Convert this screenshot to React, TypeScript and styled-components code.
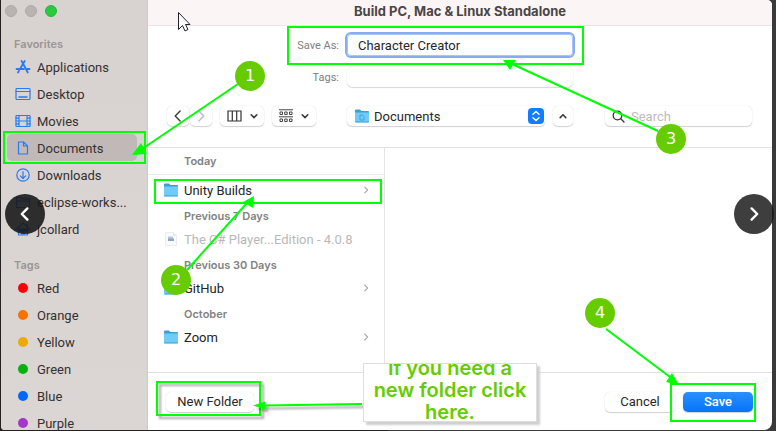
import React from "react";
import styled, { createGlobalStyle } from "styled-components";

const GlobalStyle = createGlobalStyle`
  * { box-sizing: border-box; }
  html, body, #root { height: 100%; }
  body {
    margin: 0;
    overflow: hidden;
    background: #3a3a3b;
    font-family: Roboto, "Liberation Sans", sans-serif;
    font-size: 13px;
    color: #282626;
  }
  button, input, select { font: inherit; color: inherit; margin: 0; }
  ul { list-style: none; margin: 0; padding: 0; }
`;

const Stage = styled.div`
  position: relative;
  min-height: 100vh;
  display: flex;
  padding: 0 4px 1px 1px;
  background: linear-gradient(90deg, #232122 0 50%, #3a3a3b 50%);
`;

const Dialog = styled.main`
  flex: 1;
  min-width: 0;
  display: flex;
  overflow: hidden;
  border-radius: 0 5px 8px 4px;
  background: #fff;
`;

const Sidebar = styled.aside`
  flex: none;
  width: 147px;
  height: calc(100vh - 1px);
  overflow: hidden;
  background: linear-gradient(180deg, #d8d2d1, #dbd5d3);
  border-right: 1px solid #cfc9c7;
`;

const Lights = styled.div`
  display: flex;
  gap: 8px;
  padding: 5px 4px 0;
  height: 36px;
`;

const Light = styled.button<{ $on?: boolean }>`
  width: 12px;
  height: 12px;
  padding: 0;
  border-radius: 50%;
  border: 1px solid ${(p) => (p.$on ? "#27b93b" : "#aea8a6")};
  background: ${(p) => (p.$on ? "#29c940" : "#b9b3b1")};
`;

const SideHeading = styled.h2`
  margin: 0;
  padding-left: 13px;
  font-family: Inter, sans-serif;
  font-size: 11px;
  line-height: 17px;
  font-weight: 600;
  color: #9b9593;
`;

const SideList = styled.ul`
  padding: 0 10px 0 6px;
  & + ${SideHeading} { margin-top: 15px; }
`;

const SideItem = styled.a<{ $active?: boolean }>`
  display: grid;
  grid-template-columns: 16px 1fr;
  align-items: center;
  gap: 6px;
  height: 27px;
  padding: 1px 0 0 8px;
  border-radius: 5px;
  color: #353130;
  text-decoration: none;
  white-space: nowrap;
  background: ${(p) => (p.$active ? "#c0b9b7" : "transparent")};
  svg { display: block; }
`;

const TagDot = styled.span<{ $color: string }>`
  width: 10px;
  height: 10px;
  justify-self: center;
  border-radius: 50%;
  background: ${(p) => p.$color};
`;

const Content = styled.section`
  flex: 1;
  min-width: 0;
  display: flex;
  flex-direction: column;
`;

const TitleBar = styled.header`
  height: 26px;
  padding-top: 2px;
  border-bottom: 1px solid #ebe5e5;
  background: #fcf5f5;
  text-align: center;
`;

const Title = styled.h1`
  margin: 0;
  font-family: Inter, sans-serif;
  font-size: 13px;
  line-height: 18px;
  font-weight: 700;
  color: #4a4546;
`;

const Controls = styled.form`
  display: grid;
  grid-template-columns: minmax(0, 1fr) 226px minmax(0, 1fr);
  grid-template-rows: 22px 42px 36px;
  column-gap: 8px;
  align-items: center;
  height: 121px;
  padding-top: 8px;
`;

const FieldLabel = styled.label`
  grid-column: 1;
  justify-self: end;
  font-size: 11px;
  color: #807e7e;
`;

const Field = styled.input<{ $focused?: boolean }>`
  grid-column: 2;
  width: 100%;
  height: ${(p) => (p.$focused ? 22 : 20)}px;
  padding: 0 11px;
  border: 0;
  border-radius: ${(p) => (p.$focused ? 4 : 5)}px;
  outline: 0;
  background: #fff;
  box-shadow: ${(p) =>
    p.$focused ? "0 0 0 2px #86acf4, inset 0 0 0 1px #a9c4f8" : "0 1px 1px #d6d6d6, 0 0 1px #d6d6d6"};
`;

const ToolGroup = styled.div`
  grid-column: 1;
  display: flex;
  gap: 8px;
  padding-left: 19px;
`;

const NavPair = styled.div`
  display: flex;
  gap: 1px;
`;

const ToolButton = styled.button<{ $wide?: boolean }>`
  flex: none;
  display: flex;
  align-items: center;
  justify-content: center;
  gap: 8px;
  width: ${(p) => (p.$wide ? 44 : 22)}px;
  height: 20px;
  padding: 0;
  border: 0;
  border-radius: 5px;
  background: #fff;
  box-shadow: 0 1px 1px #d0d0d0, 0 0 1px #cfcfcf;
`;

const CollapseButton = styled(ToolButton)`
  width: 20px;
`;

const Place = styled.div`
  display: flex;
  gap: 8px;
`;

const PlacePicker = styled.label`
  flex: 1;
  display: flex;
  align-items: center;
  gap: 4px;
  height: 20px;
  padding: 0 1px 0 7px;
  border-radius: 5px;
  box-shadow: 0 1px 1px #d0d0d0, 0 0 1px #cfcfcf;
  svg { flex: none; }
`;

const PlaceSelect = styled.select`
  flex: 1;
  min-width: 0;
  padding: 0;
  appearance: none;
  border: 0;
  outline: 0;
  background: transparent;
`;

const SearchBox = styled.label`
  display: flex;
  align-items: center;
  gap: 6px;
  height: 20px;
  margin: 0 20px 0 24px;
  padding-left: 7px;
  border-radius: 5px;
  box-shadow: 0 1px 1px #d0d0d0, 0 0 1px #cfcfcf;
  svg { flex: none; }
`;

const SearchInput = styled.input`
  flex: 1;
  min-width: 0;
  padding: 0;
  border: 0;
  outline: 0;
  background: transparent;
  &::placeholder { color: #bcbcbc; opacity: 1; }
`;

const Browser = styled.div`
  flex: 1;
  display: grid;
  grid-template-columns: 237px 1fr;
  border-top: 1px solid #e4e4e4;
  border-bottom: 1px solid #e0e0e0;
`;

const FileColumn = styled.div`
  border-right: 1px solid #e4e4e4;
`;

const GroupHeading = styled.h3<{ $first?: boolean }>`
  margin: 0;
  padding: ${(p) => (p.$first ? "3px 0 3px 36px" : "4px 0 1px 36px")};
  margin-bottom: ${(p) => (p.$first ? 3 : 0)}px;
  border-bottom: ${(p) => (p.$first ? "1px solid #ececec" : "0")};
  font-family: Inter, sans-serif;
  font-size: 11px;
  line-height: 20px;
  font-weight: 600;
  color: #828282;
`;

const FileRow = styled.button<{ $dim?: boolean }>`
  display: grid;
  grid-template-columns: 16px 1fr 8px;
  align-items: center;
  gap: 5px;
  width: 100%;
  height: 24px;
  padding: 0 14px 0 15px;
  border: 0;
  background: transparent;
  text-align: left;
  white-space: nowrap;
  color: ${(p) => (p.$dim ? "#b9b9b9" : "#232323")};
`;

const Footer = styled.footer`
  display: flex;
  align-items: center;
  gap: 8px;
  height: 57px;
  padding: 0 19px 0 18px;
`;

const FooterButton = styled.button<{ $primary?: boolean; $large?: boolean }>`
  width: ${(p) => (p.$large ? 88 : 70)}px;
  height: 20px;
  padding: 0;
  border: 0;
  border-radius: 5px;
  white-space: nowrap;
  font-weight: ${(p) => (p.$primary ? 500 : 400)};
  color: ${(p) => (p.$primary ? "#fff" : "#282828")};
  background: ${(p) => (p.$primary ? "linear-gradient(#2a90ff, #0574f8)" : "#fff")};
  box-shadow: 0 1px 1px #d0d0d0, 0 0 1px #cfcfcf;
  &:nth-child(2) { margin-left: auto; }
`;

const Markup = styled.svg`
  position: absolute;
  top: 0;
  left: 0;
  pointer-events: none;
`;

const Note = styled.p`
  position: absolute;
  left: 363px;
  top: 363px;
  width: 174px;
  height: 59px;
  margin: 0;
  padding: 0 8px 6px;
  overflow: hidden;
  display: flex;
  align-items: center;
  justify-content: center;
  border: 1px solid #dedede;
  background: #fff;
  box-shadow: 3px 3px 2px #cfcfcf;
  font-family: Inter, sans-serif;
  font-size: 20px;
  line-height: 22px;
  font-weight: 600;
  text-align: center;
  color: #66cc00;
`;

const Pin = styled.span<{ $x: number; $y: number }>`
  position: absolute;
  left: ${(p) => p.$x}px;
  top: ${(p) => p.$y}px;
  width: 30px;
  height: 30px;
  border-radius: 50%;
  background: #66cc00;
  color: #fff;
  font: 16px/29px "DejaVu Sans", sans-serif;
  text-align: center;
`;

const SlideButton = styled.button<{ $side: "left" | "right" }>`
  position: absolute;
  top: 194px;
  ${(p) => (p.$side === "left" ? "left: 5px;" : "right: 2px;")}
  width: 40px;
  height: 40px;
  padding: 0;
  border: 0;
  border-radius: 50%;
  background: ${(p) => (p.$side === "left" ? "rgba(22, 22, 22, 0.88)" : "rgba(20, 20, 20, 0.82)")};
  display: flex;
  align-items: center;
  justify-content: center;
`;

const Chevron = ({ d, color = "#3c3c3c", size = 8, weight = 1.5 }: { d: "left" | "right" | "up" | "down"; color?: string; size?: number; weight?: number }) => {
  const shapes = {
    left: "M6.500 1.500 3 5l3.500 3.500",
    right: "M3.500 1.500 7 5 3.500 8.500",
    up: "M1.500 7 5 3.500 8.500 7",
    down: "M1.500 3.500 5 7l3.500-3.500",
  };
  return (
    <svg width={size} height={size} viewBox="0 0 10 10" fill="none" stroke={color} strokeWidth={weight} strokeLinecap="round" strokeLinejoin="round" aria-hidden="true">
      <path d={shapes[d]} />
    </svg>
  );
};

const Folder = ({ mark }: { mark?: boolean }) => (
  <svg width="16" height="16" viewBox="0 0 16 16" aria-hidden="true">
    <path d="M1 2.500q0-1 1-1h4L7.500 3H14q1 0 1 1v4H1z" fill="#3c9fd3" />
    <path d="M1 4.500h14v9q0 1-1 1H2q-1 0-1-1z" fill="#70cbf7" />
    <path d="M1 13v.5q0 1 1 1h12q1 0 1-1V13z" fill="#58b3e2" />
    {mark && <path d="M6 7h2.500l1.500 1.500V12H6z" fill="none" stroke="#43a4d8" />}
  </svg>
);

const DocFile = () => (
  <svg width="16" height="16" viewBox="0 0 16 16" aria-hidden="true">
    <path d="M2.500 1.500h8l3 3v10h-11z" fill="#fafafa" stroke="#ececec" />
    <path d="M10.500 1.500v3h3" fill="#eee" stroke="#e6e6e6" />
    <path d="M5 5.500h5v3H5z" fill="#bcc6e0" />
    <path d="M5 7.500h6v2.500H5z" fill="#8fa2cc" />
  </svg>
);

const sideShapes: Record<string, React.ReactNode> = {
  Applications: (
    <>
      <path d="M6.500 2l2 3.200M9.700 2 5.300 9.500M8.500 5.500l4.300 8" strokeWidth="1.800" />
      <path d="M1.500 10h7.500M11.800 10h2.700M4 11.800 3 13.500" strokeWidth="1.800" />
    </>
  ),
  Desktop: (
    <>
      <rect x="1" y="2.500" width="14" height="11" rx="1" />
      <path d="M1 5.500h14" />
      <path d="M4 11h8" strokeWidth="1.500" />
    </>
  ),
  Movies: (
    <>
      <rect x="1" y="2.500" width="14" height="11" rx="0.500" />
      <path d="M4 2.500v11M12 2.500v11M4 8h8M1 5.200h3M1 8h3M1 10.800h3M12 5.200h3M12 8h3M12 10.800h3" />
    </>
  ),
  Documents: (
    <>
      <path d="M3.500 2h5l4 4v8h-9z" />
      <path d="M8.500 2v4h4" />
    </>
  ),
  Downloads: (
    <>
      <circle cx="8" cy="8" r="6.200" />
      <path d="M8 4.500v7M5.300 8.800 8 11.500l2.700-2.700" />
    </>
  ),
  "eclipse-works...": (
    <>
      <path d="M1.500 12.500V3.500h4.500l1 1.500h7.500v8.500h-13z" />
      <path d="M1.500 7h13" />
    </>
  ),
  jcollard: (
    <>
      <path d="M1 8.500 8 2l7 6.500M12 3v3" />
      <path d="M3.500 7v7h9V7M7 14v-4h2v4" />
      <path d="M4.500 8h7v2h-7z" fill="#267cf0" />
    </>
  ),
};

const tags: [string, string][] = [
  ["Red", "#fb0007"],
  ["Orange", "#f77200"],
  ["Yellow", "#edab00"],
  ["Green", "#06b20b"],
  ["Blue", "#0068fb"],
  ["Purple", "#a338c8"],
];

const groups = [
  { when: "Today", name: "Unity Builds" },
  { when: "Previous 7 Days", name: "The C# Player...Edition - 4.0.8", doc: true },
  { when: "Previous 30 Days", name: "GitHub" },
  { when: "October", name: "Zoom" },
];

const pins: [number, number, number][] = [
  [1, 235, 61],
  [2, 161, 265],
  [3, 656, 124],
  [4, 585, 298],
];

export default function App() {
  return (
    <Stage>
      <GlobalStyle />
      <Dialog>
        <Sidebar>
          <Lights>
            <Light aria-label="Close" />
            <Light aria-label="Minimize" />
            <Light aria-label="Full screen" $on />
          </Lights>
          <SideHeading>Favorites</SideHeading>
          <SideList>
            {Object.entries(sideShapes).map(([name, shape]) => (
              <li key={name}>
                <SideItem href="#" $active={name === "Documents"}>
                  <svg width="16" height="16" viewBox="0 0 16 16" fill="none" stroke="#267cf0" strokeWidth="1.200" strokeLinecap="round" strokeLinejoin="round" aria-hidden="true">
                    {shape}
                  </svg>
                  {name}
                </SideItem>
              </li>
            ))}
          </SideList>
          <SideHeading>Tags</SideHeading>
          <SideList>
            {tags.map(([name, color]) => (
              <li key={name}>
                <SideItem href="#">
                  <TagDot $color={color} />
                  {name}
                </SideItem>
              </li>
            ))}
          </SideList>
        </Sidebar>
        <Content>
          <TitleBar>
            <Title>Build PC, Mac &amp; Linux Standalone</Title>
          </TitleBar>
          <Controls onSubmit={(e) => e.preventDefault()}>
            <FieldLabel htmlFor="save-as">Save As:</FieldLabel>
            <Field id="save-as" defaultValue="Character Creator" $focused />
            <FieldLabel htmlFor="tags">Tags:</FieldLabel>
            <Field id="tags" />
            <ToolGroup>
              <NavPair>
                <ToolButton type="button" aria-label="Back"><Chevron d="left" size={14} weight={1} /></ToolButton>
                <ToolButton type="button" aria-label="Forward"><Chevron d="right" size={14} color="#bdbdbd" weight={1} /></ToolButton>
              </NavPair>
              <ToolButton type="button" aria-label="Column view" $wide>
                <svg width="15" height="12" viewBox="0 0 15 12" fill="none" stroke="#333" strokeWidth="1.200" aria-hidden="true">
                  <path d="M1 1h13v10H1zM5.300 1v10M9.700 1v10" />
                </svg>
                <Chevron d="down" weight={2} />
              </ToolButton>
              <ToolButton type="button" aria-label="Group items" $wide>
                <svg width="14" height="14" viewBox="0 0 14 14" fill="none" stroke="#444" aria-hidden="true">
                  <path d="M0 .8h14M0 7.800h14" />
                  <path d="M1 3h2.500v2.500H1zM5.700 3h2.500v2.500H5.700zM10.500 3H13v2.500h-2.500zM1 10h2.500v2.500H1zM5.700 10h2.500v2.500H5.700zM10.500 10H13v2.500h-2.500z" />
                </svg>
                <Chevron d="down" weight={2} />
              </ToolButton>
            </ToolGroup>
            <Place>
              <PlacePicker>
                <Folder mark />
                <PlaceSelect aria-label="Location" defaultValue="Documents">
                  <option>Documents</option>
                </PlaceSelect>
                <svg width="16" height="16" viewBox="0 0 16 16" fill="none" stroke="#fff" strokeWidth="1.500" strokeLinecap="round" strokeLinejoin="round" aria-hidden="true">
                  <rect width="16" height="16" rx="4" fill="#117dfb" stroke="none" />
                  <path d="M5 6.200 8 3.500l3 2.700M5 9.800l3 2.700 3-2.700" />
                </svg>
              </PlacePicker>
              <CollapseButton type="button" aria-label="Collapse"><Chevron d="up" weight={2} /></CollapseButton>
            </Place>
            <SearchBox>
              <svg width="13" height="13" viewBox="0 0 13 13" fill="none" stroke="#333" strokeWidth="1.300" strokeLinecap="round" aria-hidden="true">
                <circle cx="5.500" cy="5.500" r="4.300" />
                <path d="m8.800 8.800 3.200 3.200" />
              </svg>
              <SearchInput placeholder="Search" aria-label="Search" />
            </SearchBox>
          </Controls>
          <Browser>
            <FileColumn>
              {groups.map((g, i) => (
                <section key={g.when}>
                  <GroupHeading $first={i === 0}>{g.when}</GroupHeading>
                  <FileRow type="button" $dim={g.doc}>
                    {g.doc ? <DocFile /> : <Folder />}
                    <span>{g.name}</span>
                    {!g.doc && <Chevron d="right" color="#a9a9a9" />}
                  </FileRow>
                </section>
              ))}
            </FileColumn>
          </Browser>
          <Footer>
            <FooterButton type="button" $large>New Folder</FooterButton>
            <FooterButton type="button">Cancel</FooterButton>
            <FooterButton type="button" $primary>Save</FooterButton>
          </Footer>
        </Content>
      </Dialog>

      <SlideButton $side="left" aria-label="Previous"><Chevron d="left" color="#fff" size={16} weight={1.5} /></SlideButton>
      <SlideButton $side="right" aria-label="Next"><Chevron d="right" color="#fff" size={16} weight={1.5} /></SlideButton>

      <Markup width="776" height="431" viewBox="0 0 776 431" fill="none" stroke="#00ff00" strokeWidth="2" aria-hidden="true">
        <defs>
          <filter id="drop" x="-10%" y="-40%" width="125%" height="200%">
            <feDropShadow dx="3" dy="3" stdDeviation="1" floodColor="#000" floodOpacity="0.350" />
          </filter>
        </defs>
        <rect x="4" y="132" width="141" height="31" />
        <rect x="288" y="27" width="295" height="37" />
        <rect x="155" y="180" width="226" height="23" />
        <rect x="671" y="384" width="84" height="37" />
        <rect x="157" y="382" width="103" height="33" filter="url(#drop)" />
        <path d="M238 84 142 149M187 270l60-67M658 131 512 64M606 329l64 48" />
        <g filter="url(#drop)">
          <path d="M362 404 263 405.500" />
          <path d="m253 405.500 12-4v8z" fill="#00ff00" stroke="none" />
        </g>
        <g fill="#00ff00" stroke="none">
          <path d="m132 155 9-12 6 11z" />
          <path d="m254 196-1 12-10-6z" />
          <path d="m503 60h13l-6 10z" />
          <path d="m679 385-13-3 6-9z" />
        </g>
        <path d="M178.500 12.500v17l4-4 2.500 5.500 3-1.500-2.500-5h4.500z" fill="#fff" stroke="#20202e" strokeWidth="1" />
      </Markup>
      {pins.map(([n, x, y]) => (
        <Pin key={n} $x={x} $y={y}>{n}</Pin>
      ))}
      <Note>If you need a new folder click here.</Note>
    </Stage>
  );
}
